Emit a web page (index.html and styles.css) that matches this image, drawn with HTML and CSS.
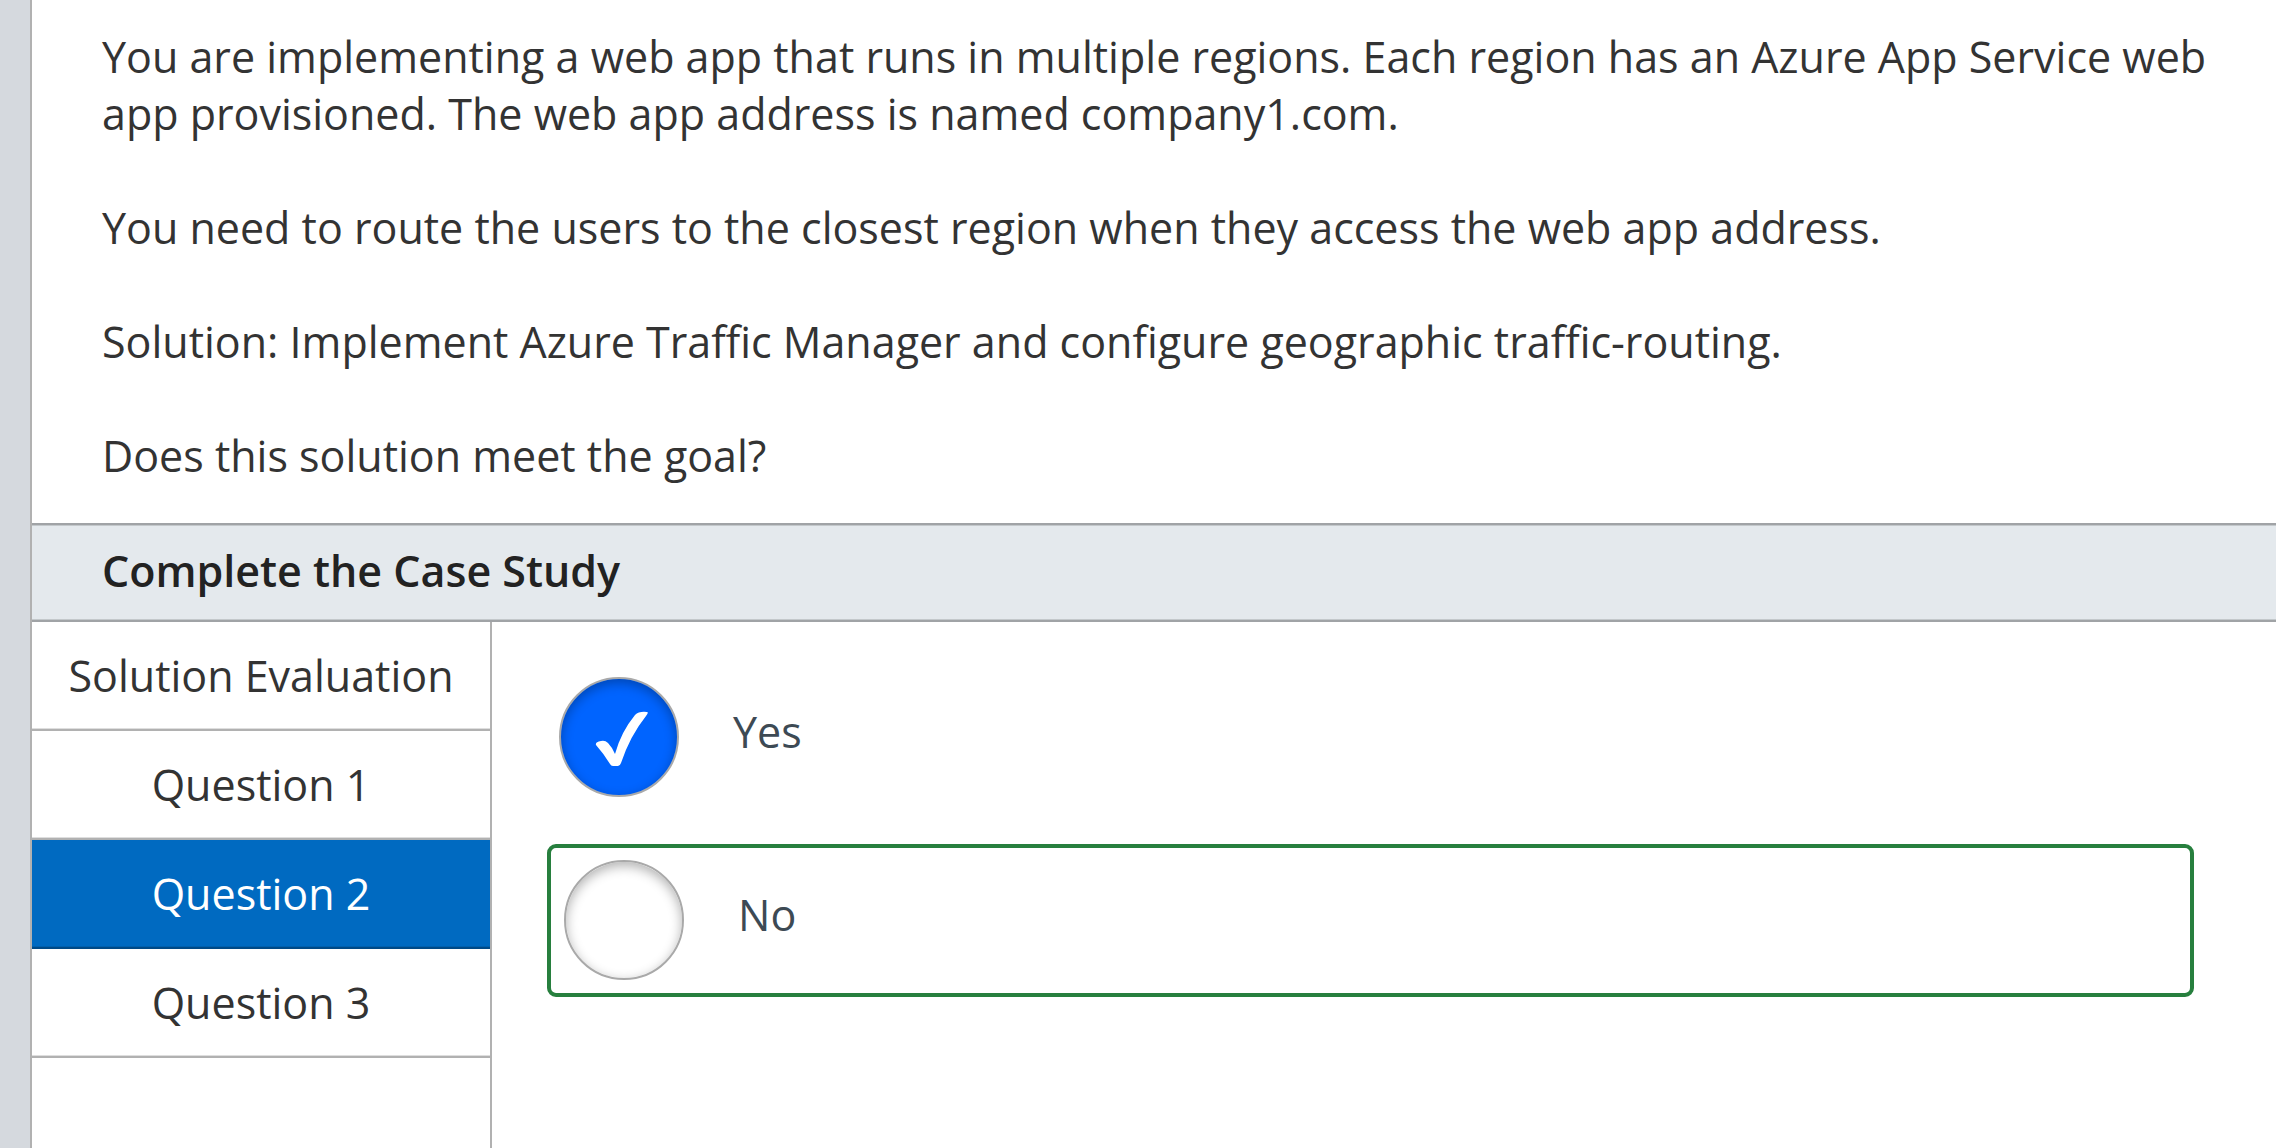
FILE: index.html
```html
<!DOCTYPE html>
<html lang="en">
<head>
<meta charset="utf-8">
<meta name="viewport" content="width=device-width, initial-scale=1">
<title>Case Study</title>
<link rel="stylesheet" href="styles.css">
</head>
<body>
<main class="page">
  <section class="scenario">
    <p>You are implementing a web app that runs in multiple regions. Each region has an Azure App Service web app provisioned. The web app address is named company1.com.</p>
    <p>You need to route the users to the closest region when they access the web app address.</p>
    <p>Solution: Implement Azure Traffic Manager and configure geographic traffic-routing.</p>
    <p>Does this solution meet the goal?</p>
  </section>
  <h2 class="section-title">Complete the Case Study</h2>
  <div class="study">
    <nav class="tabs" aria-label="Questions">
      <button class="tab" type="button">Solution Evaluation</button>
      <button class="tab" type="button">Question 1</button>
      <button class="tab tab-active" type="button" aria-current="true">Question 2</button>
      <button class="tab" type="button">Question 3</button>
    </nav>
    <form class="answers">
      <label class="answer" for="answer-yes">
        <span class="radio">
          <input class="radio-input" type="radio" id="answer-yes" name="answer" checked>
          <svg class="radio-check" viewBox="0 0 120 120" aria-hidden="true"><path d="M37 68Q36 65 42 64Q46 63 49 66Q53 70 56 77Q62 55 76 38Q80 34 88 35Q90 35 87 39Q71 59 62 86Q61 89 59 89H54Q52 89 51 87Q45 77 37 68Z" fill="#fff"/></svg>
        </span>
        <span class="answer-text">Yes</span>
      </label>
      <label class="answer answer-marked" for="answer-no">
        <span class="radio">
          <input class="radio-input" type="radio" id="answer-no" name="answer">
        </span>
        <span class="answer-text">No</span>
      </label>
    </form>
  </div>
</main>
</body>
</html>
```
FILE: styles.css
```css
* {
  box-sizing: border-box;
}

body {
  margin: 0;
  background: #d5d9de;
  color: #333;
  font-family: "Open Sans", "Noto Sans", sans-serif;
  font-size: 43px;
}

.page {
  display: flex;
  flex-direction: column;
  min-height: 100vh;
  margin-left: 30px;
  border-left: 2px solid #b1b1b1;
  background: #fff;
}

.scenario {
  display: flex;
  flex-direction: column;
  gap: 57px;
  padding: 28px 48px 39px 70px;
  line-height: 57px;
}

.scenario p {
  margin: 0;
}

.section-title {
  margin: 0;
  padding: 16px 70px 20px;
  border-top: 2px solid #a0a3a6;
  border-bottom: 2px solid #a0a3a6;
  background: #e4e9ed;
  box-shadow: inset 0 1px #c3c8cb, inset 0 -1px #c3c8cb;
  color: #222;
  font-size: 43px;
  font-weight: 600;
  line-height: 59px;
}

.study {
  display: flex;
  flex: 1;
}

.tabs {
  display: flex;
  flex-direction: column;
  flex: none;
  width: 460px;
  border-right: 2px solid #b1b1b1;
}

.tab {
  padding: 25px 0 24px;
  border: 0;
  border-bottom: 2px solid #b1b1b1;
  background: #fff;
  box-shadow: inset 0 -1px #dedede;
  color: #333;
  font: inherit;
  line-height: 58px;
}

.tab-active {
  border-bottom-color: #004a87;
  background: #006ac1;
  box-shadow: inset 0 -1px #0060ae;
  color: #fff;
}

.answers {
  display: flex;
  flex-direction: column;
  flex: 1;
  gap: 34px;
  padding: 42px 82px 42px 55px;
}

.answer {
  display: flex;
  gap: 54px;
  padding: 13px 12px;
  color: #3d4a54;
  line-height: 58px;
}

.answer-marked {
  padding: 12px 13px 13px;
  border: 4px solid #277f3e;
  border-radius: 9px;
}

.radio {
  display: grid;
  flex: none;
  width: 120px;
  height: 120px;
}

.radio-input,
.radio-check {
  grid-area: 1 / 1;
  width: 120px;
  height: 120px;
}

.radio-input {
  appearance: none;
  margin: 0;
  border: 2px solid #a9a9a9;
  border-radius: 50%;
  background: #fff;
  box-shadow: inset 0 4px 12px rgba(0, 0, 0, 0.3);
}

.radio-input:checked {
  background: #0064ff;
}

.radio-check {
  pointer-events: none;
}

.answer-text {
  padding-top: 26px;
}
```
